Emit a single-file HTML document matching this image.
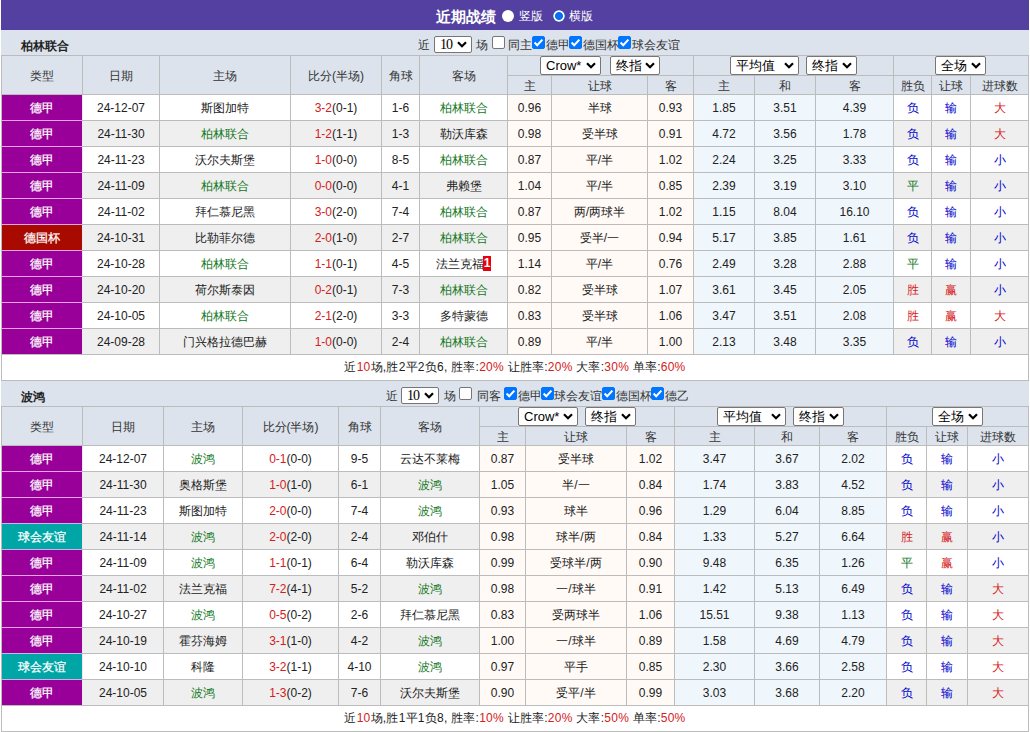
<!DOCTYPE html><html><head><meta charset="utf-8"><style>
html,body{margin:0;padding:0;background:#fff;width:1030px;height:732px;overflow:hidden}
body{font-family:"Liberation Sans",sans-serif;font-size:12px;color:#222;position:relative}
#w>div,#w>span{position:absolute;white-space:nowrap}
.ttl{color:#fff;font-weight:bold;font-size:15px}
.radio{width:12px;height:12px;border-radius:50%;background:#fff}
.radio.on{background:radial-gradient(circle,#0a6ff5 0,#0a6ff5 3.6px,#fff 4.4px,#fff 5.2px,#4f86e8 6px)}
.lb{height:25px;line-height:31px;color:#333}
.cb{width:11px;height:11px;border:1px solid #767676;border-radius:2px;background:#fff}
.cb.on{background:#0075ff;border-color:#0075ff}
.cb svg{position:absolute;left:-1px;top:-1px}
.s10{width:36px;height:15px;border:1px solid #767676;border-radius:2px;background:#fff;line-height:16px;font-size:14px;font-family:"Liberation Serif",serif;color:#000;text-indent:5px;letter-spacing:-1px}
.s10 .arr{top:4px}
.sel{height:17px;border:1px solid #767676;border-radius:2px;background:#fff;line-height:18px;font-size:13px;color:#000;text-indent:5px}
.arr{position:absolute;right:4px;top:5px;width:10px;height:7px;line-height:0}
.arr svg{display:block}
.rc{display:inline-block;margin-left:-1px;background:#e8000b;color:#fff;font-weight:bold;width:8px;height:15px;line-height:15px;text-align:center;vertical-align:1px;font-size:12px}
</style></head><body><div id="w"><div style="left:1px;top:0px;width:1028px;height:30px;background:#5340A0"></div>
<div class="ttl" style="left:436px;top:0;height:30px;line-height:33px">近期战绩</div>
<span class="radio" style="left:502px;top:10px"></span>
<div style="left:519px;top:0;line-height:33px;color:#fff">竖版</div>
<span class="radio on" style="left:553px;top:10px"></span>
<div style="left:569px;top:0;line-height:33px;color:#fff">横版</div>
<div style="left:1px;top:30px;width:1028px;height:25px;background:#DCE3ED"></div>
<div style="left:21px;top:30px;width:100px;height:25px;line-height:32px;font-weight:bold;color:#222;font-size:12px">柏林联合</div>
<div class="lb" style="left:418px;top:30px;">近</div><div class="s10" style="left:434px;top:36px">10<span class="arr"><svg width="10" height="7" viewBox="0 0 10 7"><path d="M1 1.2 L5 5.2 L9 1.2" stroke="#000" stroke-width="2.2" fill="none"/></svg></span></div><div class="lb" style="left:476px;top:30px;">场</div><div class="cb" style="left:492px;top:36px"></div><div class="lb" style="left:508px;top:30px;">同主</div><div class="cb on" style="left:532px;top:36px"><svg width="13" height="13" viewBox="0 0 13 13"><path d="M2.6 6.6 L5.2 9.2 L10.4 3.6" stroke="#fff" stroke-width="2.1" fill="none"/></svg></div><div class="lb" style="left:546px;top:30px;">德甲</div><div class="cb on" style="left:569px;top:36px"><svg width="13" height="13" viewBox="0 0 13 13"><path d="M2.6 6.6 L5.2 9.2 L10.4 3.6" stroke="#fff" stroke-width="2.1" fill="none"/></svg></div><div class="lb" style="left:583px;top:30px;">德国杯</div><div class="cb on" style="left:618px;top:36px"><svg width="13" height="13" viewBox="0 0 13 13"><path d="M2.6 6.6 L5.2 9.2 L10.4 3.6" stroke="#fff" stroke-width="2.1" fill="none"/></svg></div><div class="lb" style="left:632px;top:30px;">球会友谊</div>
<div style="left:1px;top:55px;width:1028px;height:39px;background:#DCE3ED"></div>
<div style="left:1px;top:94px;width:1028px;height:26px;background:#FFFFFF"></div>
<div style="left:507px;top:94px;width:186px;height:26px;background:#FFFAF6"></div>
<div style="left:693px;top:94px;width:200px;height:26px;background:#F0F7FC"></div>
<div style="left:1px;top:120px;width:1028px;height:26px;background:#EFEFEF"></div>
<div style="left:507px;top:120px;width:186px;height:26px;background:#FFFAF6"></div>
<div style="left:693px;top:120px;width:200px;height:26px;background:#F0F7FC"></div>
<div style="left:1px;top:146px;width:1028px;height:26px;background:#FFFFFF"></div>
<div style="left:507px;top:146px;width:186px;height:26px;background:#FFFAF6"></div>
<div style="left:693px;top:146px;width:200px;height:26px;background:#F0F7FC"></div>
<div style="left:1px;top:172px;width:1028px;height:26px;background:#EFEFEF"></div>
<div style="left:507px;top:172px;width:186px;height:26px;background:#FFFAF6"></div>
<div style="left:693px;top:172px;width:200px;height:26px;background:#F0F7FC"></div>
<div style="left:1px;top:198px;width:1028px;height:26px;background:#FFFFFF"></div>
<div style="left:507px;top:198px;width:186px;height:26px;background:#FFFAF6"></div>
<div style="left:693px;top:198px;width:200px;height:26px;background:#F0F7FC"></div>
<div style="left:1px;top:224px;width:1028px;height:26px;background:#EFEFEF"></div>
<div style="left:507px;top:224px;width:186px;height:26px;background:#FFFAF6"></div>
<div style="left:693px;top:224px;width:200px;height:26px;background:#F0F7FC"></div>
<div style="left:1px;top:250px;width:1028px;height:26px;background:#FFFFFF"></div>
<div style="left:507px;top:250px;width:186px;height:26px;background:#FFFAF6"></div>
<div style="left:693px;top:250px;width:200px;height:26px;background:#F0F7FC"></div>
<div style="left:1px;top:276px;width:1028px;height:26px;background:#EFEFEF"></div>
<div style="left:507px;top:276px;width:186px;height:26px;background:#FFFAF6"></div>
<div style="left:693px;top:276px;width:200px;height:26px;background:#F0F7FC"></div>
<div style="left:1px;top:302px;width:1028px;height:26px;background:#FFFFFF"></div>
<div style="left:507px;top:302px;width:186px;height:26px;background:#FFFAF6"></div>
<div style="left:693px;top:302px;width:200px;height:26px;background:#F0F7FC"></div>
<div style="left:1px;top:328px;width:1028px;height:26px;background:#EFEFEF"></div>
<div style="left:507px;top:328px;width:186px;height:26px;background:#FFFAF6"></div>
<div style="left:693px;top:328px;width:200px;height:26px;background:#F0F7FC"></div>
<div style="left:1px;top:354px;width:1028px;height:26px;background:#fff"></div>
<div style="left:1px;top:55px;width:1028px;height:1px;background:#BCBCBC"></div>
<div style="left:1px;top:94px;width:1028px;height:1px;background:#BCBCBC"></div>
<div style="left:1px;top:120px;width:1028px;height:1px;background:#BCBCBC"></div>
<div style="left:1px;top:146px;width:1028px;height:1px;background:#BCBCBC"></div>
<div style="left:1px;top:172px;width:1028px;height:1px;background:#BCBCBC"></div>
<div style="left:1px;top:198px;width:1028px;height:1px;background:#BCBCBC"></div>
<div style="left:1px;top:224px;width:1028px;height:1px;background:#BCBCBC"></div>
<div style="left:1px;top:250px;width:1028px;height:1px;background:#BCBCBC"></div>
<div style="left:1px;top:276px;width:1028px;height:1px;background:#BCBCBC"></div>
<div style="left:1px;top:302px;width:1028px;height:1px;background:#BCBCBC"></div>
<div style="left:1px;top:328px;width:1028px;height:1px;background:#BCBCBC"></div>
<div style="left:1px;top:354px;width:1028px;height:1px;background:#BCBCBC"></div>
<div style="left:1px;top:380px;width:1028px;height:1px;background:#BCBCBC"></div>
<div style="left:507px;top:75px;width:522px;height:1px;background:#BCBCBC"></div>
<div style="left:1px;top:55px;width:1px;height:326px;background:#BCBCBC"></div>
<div style="left:82px;top:55px;width:1px;height:300px;background:#BCBCBC"></div>
<div style="left:159px;top:55px;width:1px;height:300px;background:#BCBCBC"></div>
<div style="left:290px;top:55px;width:1px;height:300px;background:#BCBCBC"></div>
<div style="left:381px;top:55px;width:1px;height:300px;background:#BCBCBC"></div>
<div style="left:419px;top:55px;width:1px;height:300px;background:#BCBCBC"></div>
<div style="left:507px;top:55px;width:1px;height:300px;background:#BCBCBC"></div>
<div style="left:551px;top:75px;width:1px;height:280px;background:#BCBCBC"></div>
<div style="left:647px;top:75px;width:1px;height:280px;background:#BCBCBC"></div>
<div style="left:693px;top:55px;width:1px;height:300px;background:#BCBCBC"></div>
<div style="left:754px;top:75px;width:1px;height:280px;background:#BCBCBC"></div>
<div style="left:815px;top:75px;width:1px;height:280px;background:#BCBCBC"></div>
<div style="left:893px;top:55px;width:1px;height:300px;background:#BCBCBC"></div>
<div style="left:931px;top:75px;width:1px;height:280px;background:#BCBCBC"></div>
<div style="left:970px;top:75px;width:1px;height:280px;background:#BCBCBC"></div>
<div style="left:1028px;top:55px;width:1px;height:326px;background:#BCBCBC"></div>
<div style="left:2px;top:95px;width:80px;height:25px;background:#990099;color:#fff;line-height:27px;text-align:center;-webkit-text-stroke:0.25px #fff">德甲</div>
<div style="left:82px;top:95px;width:1px;height:25px;background:#F3E6F3"></div>
<div style="left:2px;top:121px;width:80px;height:25px;background:#990099;color:#fff;line-height:27px;text-align:center;-webkit-text-stroke:0.25px #fff">德甲</div>
<div style="left:82px;top:121px;width:1px;height:25px;background:#F3E6F3"></div>
<div style="left:2px;top:120px;width:80px;height:1px;background:#ECA4E6"></div>
<div style="left:2px;top:147px;width:80px;height:25px;background:#990099;color:#fff;line-height:27px;text-align:center;-webkit-text-stroke:0.25px #fff">德甲</div>
<div style="left:82px;top:147px;width:1px;height:25px;background:#F3E6F3"></div>
<div style="left:2px;top:146px;width:80px;height:1px;background:#ECA4E6"></div>
<div style="left:2px;top:173px;width:80px;height:25px;background:#990099;color:#fff;line-height:27px;text-align:center;-webkit-text-stroke:0.25px #fff">德甲</div>
<div style="left:82px;top:173px;width:1px;height:25px;background:#F3E6F3"></div>
<div style="left:2px;top:172px;width:80px;height:1px;background:#ECA4E6"></div>
<div style="left:2px;top:199px;width:80px;height:25px;background:#990099;color:#fff;line-height:27px;text-align:center;-webkit-text-stroke:0.25px #fff">德甲</div>
<div style="left:82px;top:199px;width:1px;height:25px;background:#F3E6F3"></div>
<div style="left:2px;top:198px;width:80px;height:1px;background:#ECA4E6"></div>
<div style="left:2px;top:225px;width:80px;height:25px;background:#A80A00;color:#fff;line-height:27px;text-align:center;-webkit-text-stroke:0.25px #fff">德国杯</div>
<div style="left:82px;top:225px;width:1px;height:25px;background:#F3E6F3"></div>
<div style="left:2px;top:224px;width:80px;height:1px;background:#ECA4E6"></div>
<div style="left:2px;top:251px;width:80px;height:25px;background:#990099;color:#fff;line-height:27px;text-align:center;-webkit-text-stroke:0.25px #fff">德甲</div>
<div style="left:82px;top:251px;width:1px;height:25px;background:#F3E6F3"></div>
<div style="left:2px;top:250px;width:80px;height:1px;background:#ECA4E6"></div>
<div style="left:2px;top:277px;width:80px;height:25px;background:#990099;color:#fff;line-height:27px;text-align:center;-webkit-text-stroke:0.25px #fff">德甲</div>
<div style="left:82px;top:277px;width:1px;height:25px;background:#F3E6F3"></div>
<div style="left:2px;top:276px;width:80px;height:1px;background:#ECA4E6"></div>
<div style="left:2px;top:303px;width:80px;height:25px;background:#990099;color:#fff;line-height:27px;text-align:center;-webkit-text-stroke:0.25px #fff">德甲</div>
<div style="left:82px;top:303px;width:1px;height:25px;background:#F3E6F3"></div>
<div style="left:2px;top:302px;width:80px;height:1px;background:#ECA4E6"></div>
<div style="left:2px;top:329px;width:80px;height:25px;background:#990099;color:#fff;line-height:27px;text-align:center;-webkit-text-stroke:0.25px #fff">德甲</div>
<div style="left:82px;top:329px;width:1px;height:25px;background:#F3E6F3"></div>
<div style="left:2px;top:328px;width:80px;height:1px;background:#ECA4E6"></div>
<div style="left:2px;top:56px;width:80px;height:38px;line-height:40px;text-align:center;color:#333">类型</div>
<div style="left:83px;top:56px;width:76px;height:38px;line-height:40px;text-align:center;color:#333">日期</div>
<div style="left:160px;top:56px;width:130px;height:38px;line-height:40px;text-align:center;color:#333">主场</div>
<div style="left:291px;top:56px;width:90px;height:38px;line-height:40px;text-align:center;color:#333">比分(半场)</div>
<div style="left:382px;top:56px;width:37px;height:38px;line-height:40px;text-align:center;color:#333">角球</div>
<div style="left:420px;top:56px;width:87px;height:38px;line-height:40px;text-align:center;color:#333">客场</div>
<div style="left:508px;top:76px;width:43px;height:18px;line-height:20px;text-align:center;color:#333">主</div>
<div style="left:552px;top:76px;width:95px;height:18px;line-height:20px;text-align:center;color:#333">让球</div>
<div style="left:648px;top:76px;width:45px;height:18px;line-height:20px;text-align:center;color:#333">客</div>
<div style="left:694px;top:76px;width:60px;height:18px;line-height:20px;text-align:center;color:#333">主</div>
<div style="left:755px;top:76px;width:60px;height:18px;line-height:20px;text-align:center;color:#333">和</div>
<div style="left:816px;top:76px;width:77px;height:18px;line-height:20px;text-align:center;color:#333">客</div>
<div style="left:894px;top:76px;width:37px;height:18px;line-height:20px;text-align:center;color:#333">胜负</div>
<div style="left:932px;top:76px;width:38px;height:18px;line-height:20px;text-align:center;color:#333">让球</div>
<div style="left:971px;top:76px;width:57px;height:18px;line-height:20px;text-align:center;color:#333">进球数</div>
<div class="sel" style="left:540px;top:56px;width:59px">Crow*<span class="arr"><svg width="10" height="7" viewBox="0 0 10 7"><path d="M1 1.2 L5 5.2 L9 1.2" stroke="#000" stroke-width="2.2" fill="none"/></svg></span></div><div class="sel" style="left:610px;top:56px;width:48px">终指<span class="arr"><svg width="10" height="7" viewBox="0 0 10 7"><path d="M1 1.2 L5 5.2 L9 1.2" stroke="#000" stroke-width="2.2" fill="none"/></svg></span></div><div class="sel" style="left:730px;top:56px;width:67px">平均值<span class="arr"><svg width="10" height="7" viewBox="0 0 10 7"><path d="M1 1.2 L5 5.2 L9 1.2" stroke="#000" stroke-width="2.2" fill="none"/></svg></span></div><div class="sel" style="left:806px;top:56px;width:49px">终指<span class="arr"><svg width="10" height="7" viewBox="0 0 10 7"><path d="M1 1.2 L5 5.2 L9 1.2" stroke="#000" stroke-width="2.2" fill="none"/></svg></span></div><div class="sel" style="left:935px;top:56px;width:49px">全场<span class="arr"><svg width="10" height="7" viewBox="0 0 10 7"><path d="M1 1.2 L5 5.2 L9 1.2" stroke="#000" stroke-width="2.2" fill="none"/></svg></span></div>
<div style="left:83px;top:95px;width:76px;height:25px;line-height:27px;text-align:center;">24-12-07</div>
<div style="left:160px;top:95px;width:130px;height:25px;line-height:27px;text-align:center;">斯图加特</div>
<div style="left:291px;top:95px;width:90px;height:25px;line-height:27px;text-align:center;"><span style="color:#D42020">3-2</span>(0-1)</div>
<div style="left:382px;top:95px;width:37px;height:25px;line-height:27px;text-align:center;">1-6</div>
<div style="left:420px;top:95px;width:87px;height:25px;line-height:27px;text-align:center;color:#117722">柏林联合</div>
<div style="left:508px;top:95px;width:43px;height:25px;line-height:27px;text-align:center;">0.96</div>
<div style="left:552px;top:95px;width:95px;height:25px;line-height:27px;text-align:center;">半球</div>
<div style="left:648px;top:95px;width:45px;height:25px;line-height:27px;text-align:center;">0.93</div>
<div style="left:694px;top:95px;width:60px;height:25px;line-height:27px;text-align:center;">1.85</div>
<div style="left:755px;top:95px;width:60px;height:25px;line-height:27px;text-align:center;">3.51</div>
<div style="left:816px;top:95px;width:77px;height:25px;line-height:27px;text-align:center;">4.39</div>
<div style="left:894px;top:95px;width:37px;height:25px;line-height:27px;text-align:center;color:#0000CC">负</div>
<div style="left:932px;top:95px;width:38px;height:25px;line-height:27px;text-align:center;color:#0000CC">输</div>
<div style="left:971px;top:95px;width:57px;height:25px;line-height:27px;text-align:center;color:#D42020">大</div>
<div style="left:83px;top:121px;width:76px;height:25px;line-height:27px;text-align:center;">24-11-30</div>
<div style="left:160px;top:121px;width:130px;height:25px;line-height:27px;text-align:center;color:#117722">柏林联合</div>
<div style="left:291px;top:121px;width:90px;height:25px;line-height:27px;text-align:center;"><span style="color:#D42020">1-2</span>(1-1)</div>
<div style="left:382px;top:121px;width:37px;height:25px;line-height:27px;text-align:center;">1-3</div>
<div style="left:420px;top:121px;width:87px;height:25px;line-height:27px;text-align:center;">勒沃库森</div>
<div style="left:508px;top:121px;width:43px;height:25px;line-height:27px;text-align:center;">0.98</div>
<div style="left:552px;top:121px;width:95px;height:25px;line-height:27px;text-align:center;">受半球</div>
<div style="left:648px;top:121px;width:45px;height:25px;line-height:27px;text-align:center;">0.91</div>
<div style="left:694px;top:121px;width:60px;height:25px;line-height:27px;text-align:center;">4.72</div>
<div style="left:755px;top:121px;width:60px;height:25px;line-height:27px;text-align:center;">3.56</div>
<div style="left:816px;top:121px;width:77px;height:25px;line-height:27px;text-align:center;">1.78</div>
<div style="left:894px;top:121px;width:37px;height:25px;line-height:27px;text-align:center;color:#0000CC">负</div>
<div style="left:932px;top:121px;width:38px;height:25px;line-height:27px;text-align:center;color:#0000CC">输</div>
<div style="left:971px;top:121px;width:57px;height:25px;line-height:27px;text-align:center;color:#D42020">大</div>
<div style="left:83px;top:147px;width:76px;height:25px;line-height:27px;text-align:center;">24-11-23</div>
<div style="left:160px;top:147px;width:130px;height:25px;line-height:27px;text-align:center;">沃尔夫斯堡</div>
<div style="left:291px;top:147px;width:90px;height:25px;line-height:27px;text-align:center;"><span style="color:#D42020">1-0</span>(0-0)</div>
<div style="left:382px;top:147px;width:37px;height:25px;line-height:27px;text-align:center;">8-5</div>
<div style="left:420px;top:147px;width:87px;height:25px;line-height:27px;text-align:center;color:#117722">柏林联合</div>
<div style="left:508px;top:147px;width:43px;height:25px;line-height:27px;text-align:center;">0.87</div>
<div style="left:552px;top:147px;width:95px;height:25px;line-height:27px;text-align:center;">平/半</div>
<div style="left:648px;top:147px;width:45px;height:25px;line-height:27px;text-align:center;">1.02</div>
<div style="left:694px;top:147px;width:60px;height:25px;line-height:27px;text-align:center;">2.24</div>
<div style="left:755px;top:147px;width:60px;height:25px;line-height:27px;text-align:center;">3.25</div>
<div style="left:816px;top:147px;width:77px;height:25px;line-height:27px;text-align:center;">3.33</div>
<div style="left:894px;top:147px;width:37px;height:25px;line-height:27px;text-align:center;color:#0000CC">负</div>
<div style="left:932px;top:147px;width:38px;height:25px;line-height:27px;text-align:center;color:#0000CC">输</div>
<div style="left:971px;top:147px;width:57px;height:25px;line-height:27px;text-align:center;color:#0000CC">小</div>
<div style="left:83px;top:173px;width:76px;height:25px;line-height:27px;text-align:center;">24-11-09</div>
<div style="left:160px;top:173px;width:130px;height:25px;line-height:27px;text-align:center;color:#117722">柏林联合</div>
<div style="left:291px;top:173px;width:90px;height:25px;line-height:27px;text-align:center;"><span style="color:#D42020">0-0</span>(0-0)</div>
<div style="left:382px;top:173px;width:37px;height:25px;line-height:27px;text-align:center;">4-1</div>
<div style="left:420px;top:173px;width:87px;height:25px;line-height:27px;text-align:center;">弗赖堡</div>
<div style="left:508px;top:173px;width:43px;height:25px;line-height:27px;text-align:center;">1.04</div>
<div style="left:552px;top:173px;width:95px;height:25px;line-height:27px;text-align:center;">平/半</div>
<div style="left:648px;top:173px;width:45px;height:25px;line-height:27px;text-align:center;">0.85</div>
<div style="left:694px;top:173px;width:60px;height:25px;line-height:27px;text-align:center;">2.39</div>
<div style="left:755px;top:173px;width:60px;height:25px;line-height:27px;text-align:center;">3.19</div>
<div style="left:816px;top:173px;width:77px;height:25px;line-height:27px;text-align:center;">3.10</div>
<div style="left:894px;top:173px;width:37px;height:25px;line-height:27px;text-align:center;color:#117722">平</div>
<div style="left:932px;top:173px;width:38px;height:25px;line-height:27px;text-align:center;color:#0000CC">输</div>
<div style="left:971px;top:173px;width:57px;height:25px;line-height:27px;text-align:center;color:#0000CC">小</div>
<div style="left:83px;top:199px;width:76px;height:25px;line-height:27px;text-align:center;">24-11-02</div>
<div style="left:160px;top:199px;width:130px;height:25px;line-height:27px;text-align:center;">拜仁慕尼黑</div>
<div style="left:291px;top:199px;width:90px;height:25px;line-height:27px;text-align:center;"><span style="color:#D42020">3-0</span>(2-0)</div>
<div style="left:382px;top:199px;width:37px;height:25px;line-height:27px;text-align:center;">7-4</div>
<div style="left:420px;top:199px;width:87px;height:25px;line-height:27px;text-align:center;color:#117722">柏林联合</div>
<div style="left:508px;top:199px;width:43px;height:25px;line-height:27px;text-align:center;">0.87</div>
<div style="left:552px;top:199px;width:95px;height:25px;line-height:27px;text-align:center;">两/两球半</div>
<div style="left:648px;top:199px;width:45px;height:25px;line-height:27px;text-align:center;">1.02</div>
<div style="left:694px;top:199px;width:60px;height:25px;line-height:27px;text-align:center;">1.15</div>
<div style="left:755px;top:199px;width:60px;height:25px;line-height:27px;text-align:center;">8.04</div>
<div style="left:816px;top:199px;width:77px;height:25px;line-height:27px;text-align:center;">16.10</div>
<div style="left:894px;top:199px;width:37px;height:25px;line-height:27px;text-align:center;color:#0000CC">负</div>
<div style="left:932px;top:199px;width:38px;height:25px;line-height:27px;text-align:center;color:#0000CC">输</div>
<div style="left:971px;top:199px;width:57px;height:25px;line-height:27px;text-align:center;color:#0000CC">小</div>
<div style="left:83px;top:225px;width:76px;height:25px;line-height:27px;text-align:center;">24-10-31</div>
<div style="left:160px;top:225px;width:130px;height:25px;line-height:27px;text-align:center;">比勒菲尔德</div>
<div style="left:291px;top:225px;width:90px;height:25px;line-height:27px;text-align:center;"><span style="color:#D42020">2-0</span>(1-0)</div>
<div style="left:382px;top:225px;width:37px;height:25px;line-height:27px;text-align:center;">2-7</div>
<div style="left:420px;top:225px;width:87px;height:25px;line-height:27px;text-align:center;color:#117722">柏林联合</div>
<div style="left:508px;top:225px;width:43px;height:25px;line-height:27px;text-align:center;">0.95</div>
<div style="left:552px;top:225px;width:95px;height:25px;line-height:27px;text-align:center;">受半/一</div>
<div style="left:648px;top:225px;width:45px;height:25px;line-height:27px;text-align:center;">0.94</div>
<div style="left:694px;top:225px;width:60px;height:25px;line-height:27px;text-align:center;">5.17</div>
<div style="left:755px;top:225px;width:60px;height:25px;line-height:27px;text-align:center;">3.85</div>
<div style="left:816px;top:225px;width:77px;height:25px;line-height:27px;text-align:center;">1.61</div>
<div style="left:894px;top:225px;width:37px;height:25px;line-height:27px;text-align:center;color:#0000CC">负</div>
<div style="left:932px;top:225px;width:38px;height:25px;line-height:27px;text-align:center;color:#0000CC">输</div>
<div style="left:971px;top:225px;width:57px;height:25px;line-height:27px;text-align:center;color:#0000CC">小</div>
<div style="left:83px;top:251px;width:76px;height:25px;line-height:27px;text-align:center;">24-10-28</div>
<div style="left:160px;top:251px;width:130px;height:25px;line-height:27px;text-align:center;color:#117722">柏林联合</div>
<div style="left:291px;top:251px;width:90px;height:25px;line-height:27px;text-align:center;"><span style="color:#D42020">1-1</span>(0-1)</div>
<div style="left:382px;top:251px;width:37px;height:25px;line-height:27px;text-align:center;">4-5</div>
<div style="left:420px;top:251px;width:87px;height:25px;line-height:27px;text-align:center;">法兰克福<span class="rc">1</span></div>
<div style="left:508px;top:251px;width:43px;height:25px;line-height:27px;text-align:center;">1.14</div>
<div style="left:552px;top:251px;width:95px;height:25px;line-height:27px;text-align:center;">平/半</div>
<div style="left:648px;top:251px;width:45px;height:25px;line-height:27px;text-align:center;">0.76</div>
<div style="left:694px;top:251px;width:60px;height:25px;line-height:27px;text-align:center;">2.49</div>
<div style="left:755px;top:251px;width:60px;height:25px;line-height:27px;text-align:center;">3.28</div>
<div style="left:816px;top:251px;width:77px;height:25px;line-height:27px;text-align:center;">2.88</div>
<div style="left:894px;top:251px;width:37px;height:25px;line-height:27px;text-align:center;color:#117722">平</div>
<div style="left:932px;top:251px;width:38px;height:25px;line-height:27px;text-align:center;color:#0000CC">输</div>
<div style="left:971px;top:251px;width:57px;height:25px;line-height:27px;text-align:center;color:#0000CC">小</div>
<div style="left:83px;top:277px;width:76px;height:25px;line-height:27px;text-align:center;">24-10-20</div>
<div style="left:160px;top:277px;width:130px;height:25px;line-height:27px;text-align:center;">荷尔斯泰因</div>
<div style="left:291px;top:277px;width:90px;height:25px;line-height:27px;text-align:center;"><span style="color:#D42020">0-2</span>(0-1)</div>
<div style="left:382px;top:277px;width:37px;height:25px;line-height:27px;text-align:center;">7-3</div>
<div style="left:420px;top:277px;width:87px;height:25px;line-height:27px;text-align:center;color:#117722">柏林联合</div>
<div style="left:508px;top:277px;width:43px;height:25px;line-height:27px;text-align:center;">0.82</div>
<div style="left:552px;top:277px;width:95px;height:25px;line-height:27px;text-align:center;">受半球</div>
<div style="left:648px;top:277px;width:45px;height:25px;line-height:27px;text-align:center;">1.07</div>
<div style="left:694px;top:277px;width:60px;height:25px;line-height:27px;text-align:center;">3.61</div>
<div style="left:755px;top:277px;width:60px;height:25px;line-height:27px;text-align:center;">3.45</div>
<div style="left:816px;top:277px;width:77px;height:25px;line-height:27px;text-align:center;">2.05</div>
<div style="left:894px;top:277px;width:37px;height:25px;line-height:27px;text-align:center;color:#D42020">胜</div>
<div style="left:932px;top:277px;width:38px;height:25px;line-height:27px;text-align:center;color:#D42020">赢</div>
<div style="left:971px;top:277px;width:57px;height:25px;line-height:27px;text-align:center;color:#0000CC">小</div>
<div style="left:83px;top:303px;width:76px;height:25px;line-height:27px;text-align:center;">24-10-05</div>
<div style="left:160px;top:303px;width:130px;height:25px;line-height:27px;text-align:center;color:#117722">柏林联合</div>
<div style="left:291px;top:303px;width:90px;height:25px;line-height:27px;text-align:center;"><span style="color:#D42020">2-1</span>(2-0)</div>
<div style="left:382px;top:303px;width:37px;height:25px;line-height:27px;text-align:center;">3-3</div>
<div style="left:420px;top:303px;width:87px;height:25px;line-height:27px;text-align:center;">多特蒙德</div>
<div style="left:508px;top:303px;width:43px;height:25px;line-height:27px;text-align:center;">0.83</div>
<div style="left:552px;top:303px;width:95px;height:25px;line-height:27px;text-align:center;">受半球</div>
<div style="left:648px;top:303px;width:45px;height:25px;line-height:27px;text-align:center;">1.06</div>
<div style="left:694px;top:303px;width:60px;height:25px;line-height:27px;text-align:center;">3.47</div>
<div style="left:755px;top:303px;width:60px;height:25px;line-height:27px;text-align:center;">3.51</div>
<div style="left:816px;top:303px;width:77px;height:25px;line-height:27px;text-align:center;">2.08</div>
<div style="left:894px;top:303px;width:37px;height:25px;line-height:27px;text-align:center;color:#D42020">胜</div>
<div style="left:932px;top:303px;width:38px;height:25px;line-height:27px;text-align:center;color:#D42020">赢</div>
<div style="left:971px;top:303px;width:57px;height:25px;line-height:27px;text-align:center;color:#D42020">大</div>
<div style="left:83px;top:329px;width:76px;height:25px;line-height:27px;text-align:center;">24-09-28</div>
<div style="left:160px;top:329px;width:130px;height:25px;line-height:27px;text-align:center;">门兴格拉德巴赫</div>
<div style="left:291px;top:329px;width:90px;height:25px;line-height:27px;text-align:center;"><span style="color:#D42020">1-0</span>(0-0)</div>
<div style="left:382px;top:329px;width:37px;height:25px;line-height:27px;text-align:center;">2-4</div>
<div style="left:420px;top:329px;width:87px;height:25px;line-height:27px;text-align:center;color:#117722">柏林联合</div>
<div style="left:508px;top:329px;width:43px;height:25px;line-height:27px;text-align:center;">0.89</div>
<div style="left:552px;top:329px;width:95px;height:25px;line-height:27px;text-align:center;">平/半</div>
<div style="left:648px;top:329px;width:45px;height:25px;line-height:27px;text-align:center;">1.00</div>
<div style="left:694px;top:329px;width:60px;height:25px;line-height:27px;text-align:center;">2.13</div>
<div style="left:755px;top:329px;width:60px;height:25px;line-height:27px;text-align:center;">3.48</div>
<div style="left:816px;top:329px;width:77px;height:25px;line-height:27px;text-align:center;">3.35</div>
<div style="left:894px;top:329px;width:37px;height:25px;line-height:27px;text-align:center;color:#0000CC">负</div>
<div style="left:932px;top:329px;width:38px;height:25px;line-height:27px;text-align:center;color:#0000CC">输</div>
<div style="left:971px;top:329px;width:57px;height:25px;line-height:27px;text-align:center;color:#0000CC">小</div>
<div style="left:1px;top:355px;width:1028px;height:25px;line-height:25px;text-align:center;letter-spacing:0.25px">近<span style="color:#D42020">10</span>场,胜2平2负6, 胜率:<span style="color:#D42020">20%</span> 让胜率:<span style="color:#D42020">20%</span> 大率:<span style="color:#D42020">30%</span> 单率:<span style="color:#D42020">60%</span></div>
<div style="left:1px;top:381px;width:1028px;height:25px;background:#DCE3ED"></div>
<div style="left:21px;top:381px;width:100px;height:25px;line-height:32px;font-weight:bold;color:#222;font-size:12px">波鸿</div>
<div class="lb" style="left:386px;top:381px;">近</div><div class="s10" style="left:401px;top:387px">10<span class="arr"><svg width="10" height="7" viewBox="0 0 10 7"><path d="M1 1.2 L5 5.2 L9 1.2" stroke="#000" stroke-width="2.2" fill="none"/></svg></span></div><div class="lb" style="left:444px;top:381px;">场</div><div class="cb" style="left:459px;top:387px"></div><div class="lb" style="left:477px;top:381px;">同客</div><div class="cb on" style="left:504px;top:387px"><svg width="13" height="13" viewBox="0 0 13 13"><path d="M2.6 6.6 L5.2 9.2 L10.4 3.6" stroke="#fff" stroke-width="2.1" fill="none"/></svg></div><div class="lb" style="left:518px;top:381px;">德甲</div><div class="cb on" style="left:541px;top:387px"><svg width="13" height="13" viewBox="0 0 13 13"><path d="M2.6 6.6 L5.2 9.2 L10.4 3.6" stroke="#fff" stroke-width="2.1" fill="none"/></svg></div><div class="lb" style="left:554px;top:381px;">球会友谊</div><div class="cb on" style="left:602px;top:387px"><svg width="13" height="13" viewBox="0 0 13 13"><path d="M2.6 6.6 L5.2 9.2 L10.4 3.6" stroke="#fff" stroke-width="2.1" fill="none"/></svg></div><div class="lb" style="left:616px;top:381px;">德国杯</div><div class="cb on" style="left:651px;top:387px"><svg width="13" height="13" viewBox="0 0 13 13"><path d="M2.6 6.6 L5.2 9.2 L10.4 3.6" stroke="#fff" stroke-width="2.1" fill="none"/></svg></div><div class="lb" style="left:665px;top:381px;">德乙</div>
<div style="left:1px;top:406px;width:1028px;height:39px;background:#DCE3ED"></div>
<div style="left:1px;top:445px;width:1028px;height:26px;background:#FFFFFF"></div>
<div style="left:479px;top:445px;width:195px;height:26px;background:#FFFAF6"></div>
<div style="left:674px;top:445px;width:212px;height:26px;background:#F0F7FC"></div>
<div style="left:1px;top:471px;width:1028px;height:26px;background:#EFEFEF"></div>
<div style="left:479px;top:471px;width:195px;height:26px;background:#FFFAF6"></div>
<div style="left:674px;top:471px;width:212px;height:26px;background:#F0F7FC"></div>
<div style="left:1px;top:497px;width:1028px;height:26px;background:#FFFFFF"></div>
<div style="left:479px;top:497px;width:195px;height:26px;background:#FFFAF6"></div>
<div style="left:674px;top:497px;width:212px;height:26px;background:#F0F7FC"></div>
<div style="left:1px;top:523px;width:1028px;height:26px;background:#EFEFEF"></div>
<div style="left:479px;top:523px;width:195px;height:26px;background:#FFFAF6"></div>
<div style="left:674px;top:523px;width:212px;height:26px;background:#F0F7FC"></div>
<div style="left:1px;top:549px;width:1028px;height:26px;background:#FFFFFF"></div>
<div style="left:479px;top:549px;width:195px;height:26px;background:#FFFAF6"></div>
<div style="left:674px;top:549px;width:212px;height:26px;background:#F0F7FC"></div>
<div style="left:1px;top:575px;width:1028px;height:26px;background:#EFEFEF"></div>
<div style="left:479px;top:575px;width:195px;height:26px;background:#FFFAF6"></div>
<div style="left:674px;top:575px;width:212px;height:26px;background:#F0F7FC"></div>
<div style="left:1px;top:601px;width:1028px;height:26px;background:#FFFFFF"></div>
<div style="left:479px;top:601px;width:195px;height:26px;background:#FFFAF6"></div>
<div style="left:674px;top:601px;width:212px;height:26px;background:#F0F7FC"></div>
<div style="left:1px;top:627px;width:1028px;height:26px;background:#EFEFEF"></div>
<div style="left:479px;top:627px;width:195px;height:26px;background:#FFFAF6"></div>
<div style="left:674px;top:627px;width:212px;height:26px;background:#F0F7FC"></div>
<div style="left:1px;top:653px;width:1028px;height:26px;background:#FFFFFF"></div>
<div style="left:479px;top:653px;width:195px;height:26px;background:#FFFAF6"></div>
<div style="left:674px;top:653px;width:212px;height:26px;background:#F0F7FC"></div>
<div style="left:1px;top:679px;width:1028px;height:26px;background:#EFEFEF"></div>
<div style="left:479px;top:679px;width:195px;height:26px;background:#FFFAF6"></div>
<div style="left:674px;top:679px;width:212px;height:26px;background:#F0F7FC"></div>
<div style="left:1px;top:705px;width:1028px;height:26px;background:#fff"></div>
<div style="left:1px;top:406px;width:1028px;height:1px;background:#BCBCBC"></div>
<div style="left:1px;top:445px;width:1028px;height:1px;background:#BCBCBC"></div>
<div style="left:1px;top:471px;width:1028px;height:1px;background:#BCBCBC"></div>
<div style="left:1px;top:497px;width:1028px;height:1px;background:#BCBCBC"></div>
<div style="left:1px;top:523px;width:1028px;height:1px;background:#BCBCBC"></div>
<div style="left:1px;top:549px;width:1028px;height:1px;background:#BCBCBC"></div>
<div style="left:1px;top:575px;width:1028px;height:1px;background:#BCBCBC"></div>
<div style="left:1px;top:601px;width:1028px;height:1px;background:#BCBCBC"></div>
<div style="left:1px;top:627px;width:1028px;height:1px;background:#BCBCBC"></div>
<div style="left:1px;top:653px;width:1028px;height:1px;background:#BCBCBC"></div>
<div style="left:1px;top:679px;width:1028px;height:1px;background:#BCBCBC"></div>
<div style="left:1px;top:705px;width:1028px;height:1px;background:#BCBCBC"></div>
<div style="left:1px;top:731px;width:1028px;height:1px;background:#BCBCBC"></div>
<div style="left:479px;top:426px;width:550px;height:1px;background:#BCBCBC"></div>
<div style="left:1px;top:406px;width:1px;height:326px;background:#BCBCBC"></div>
<div style="left:82px;top:406px;width:1px;height:300px;background:#BCBCBC"></div>
<div style="left:163px;top:406px;width:1px;height:300px;background:#BCBCBC"></div>
<div style="left:242px;top:406px;width:1px;height:300px;background:#BCBCBC"></div>
<div style="left:338px;top:406px;width:1px;height:300px;background:#BCBCBC"></div>
<div style="left:380px;top:406px;width:1px;height:300px;background:#BCBCBC"></div>
<div style="left:479px;top:406px;width:1px;height:300px;background:#BCBCBC"></div>
<div style="left:525px;top:426px;width:1px;height:280px;background:#BCBCBC"></div>
<div style="left:626px;top:426px;width:1px;height:280px;background:#BCBCBC"></div>
<div style="left:674px;top:406px;width:1px;height:300px;background:#BCBCBC"></div>
<div style="left:754px;top:426px;width:1px;height:280px;background:#BCBCBC"></div>
<div style="left:819px;top:426px;width:1px;height:280px;background:#BCBCBC"></div>
<div style="left:886px;top:406px;width:1px;height:300px;background:#BCBCBC"></div>
<div style="left:926px;top:426px;width:1px;height:280px;background:#BCBCBC"></div>
<div style="left:967px;top:426px;width:1px;height:280px;background:#BCBCBC"></div>
<div style="left:1028px;top:406px;width:1px;height:326px;background:#BCBCBC"></div>
<div style="left:2px;top:446px;width:80px;height:25px;background:#990099;color:#fff;line-height:27px;text-align:center;-webkit-text-stroke:0.25px #fff">德甲</div>
<div style="left:82px;top:446px;width:1px;height:25px;background:#F3E6F3"></div>
<div style="left:2px;top:472px;width:80px;height:25px;background:#990099;color:#fff;line-height:27px;text-align:center;-webkit-text-stroke:0.25px #fff">德甲</div>
<div style="left:82px;top:472px;width:1px;height:25px;background:#F3E6F3"></div>
<div style="left:2px;top:471px;width:80px;height:1px;background:#ECA4E6"></div>
<div style="left:2px;top:498px;width:80px;height:25px;background:#990099;color:#fff;line-height:27px;text-align:center;-webkit-text-stroke:0.25px #fff">德甲</div>
<div style="left:82px;top:498px;width:1px;height:25px;background:#F3E6F3"></div>
<div style="left:2px;top:497px;width:80px;height:1px;background:#ECA4E6"></div>
<div style="left:2px;top:524px;width:80px;height:25px;background:#00A6A6;color:#fff;line-height:27px;text-align:center;-webkit-text-stroke:0.25px #fff">球会友谊</div>
<div style="left:82px;top:524px;width:1px;height:25px;background:#F3E6F3"></div>
<div style="left:2px;top:523px;width:80px;height:1px;background:#C9B8E6"></div>
<div style="left:2px;top:550px;width:80px;height:25px;background:#990099;color:#fff;line-height:27px;text-align:center;-webkit-text-stroke:0.25px #fff">德甲</div>
<div style="left:82px;top:550px;width:1px;height:25px;background:#F3E6F3"></div>
<div style="left:2px;top:549px;width:80px;height:1px;background:#C9B8E6"></div>
<div style="left:2px;top:576px;width:80px;height:25px;background:#990099;color:#fff;line-height:27px;text-align:center;-webkit-text-stroke:0.25px #fff">德甲</div>
<div style="left:82px;top:576px;width:1px;height:25px;background:#F3E6F3"></div>
<div style="left:2px;top:575px;width:80px;height:1px;background:#ECA4E6"></div>
<div style="left:2px;top:602px;width:80px;height:25px;background:#990099;color:#fff;line-height:27px;text-align:center;-webkit-text-stroke:0.25px #fff">德甲</div>
<div style="left:82px;top:602px;width:1px;height:25px;background:#F3E6F3"></div>
<div style="left:2px;top:601px;width:80px;height:1px;background:#ECA4E6"></div>
<div style="left:2px;top:628px;width:80px;height:25px;background:#990099;color:#fff;line-height:27px;text-align:center;-webkit-text-stroke:0.25px #fff">德甲</div>
<div style="left:82px;top:628px;width:1px;height:25px;background:#F3E6F3"></div>
<div style="left:2px;top:627px;width:80px;height:1px;background:#ECA4E6"></div>
<div style="left:2px;top:654px;width:80px;height:25px;background:#00A6A6;color:#fff;line-height:27px;text-align:center;-webkit-text-stroke:0.25px #fff">球会友谊</div>
<div style="left:82px;top:654px;width:1px;height:25px;background:#F3E6F3"></div>
<div style="left:2px;top:653px;width:80px;height:1px;background:#C9B8E6"></div>
<div style="left:2px;top:680px;width:80px;height:25px;background:#990099;color:#fff;line-height:27px;text-align:center;-webkit-text-stroke:0.25px #fff">德甲</div>
<div style="left:82px;top:680px;width:1px;height:25px;background:#F3E6F3"></div>
<div style="left:2px;top:679px;width:80px;height:1px;background:#C9B8E6"></div>
<div style="left:2px;top:407px;width:80px;height:38px;line-height:40px;text-align:center;color:#333">类型</div>
<div style="left:83px;top:407px;width:80px;height:38px;line-height:40px;text-align:center;color:#333">日期</div>
<div style="left:164px;top:407px;width:78px;height:38px;line-height:40px;text-align:center;color:#333">主场</div>
<div style="left:243px;top:407px;width:95px;height:38px;line-height:40px;text-align:center;color:#333">比分(半场)</div>
<div style="left:339px;top:407px;width:41px;height:38px;line-height:40px;text-align:center;color:#333">角球</div>
<div style="left:381px;top:407px;width:98px;height:38px;line-height:40px;text-align:center;color:#333">客场</div>
<div style="left:480px;top:427px;width:45px;height:18px;line-height:20px;text-align:center;color:#333">主</div>
<div style="left:526px;top:427px;width:100px;height:18px;line-height:20px;text-align:center;color:#333">让球</div>
<div style="left:627px;top:427px;width:47px;height:18px;line-height:20px;text-align:center;color:#333">客</div>
<div style="left:675px;top:427px;width:79px;height:18px;line-height:20px;text-align:center;color:#333">主</div>
<div style="left:755px;top:427px;width:64px;height:18px;line-height:20px;text-align:center;color:#333">和</div>
<div style="left:820px;top:427px;width:66px;height:18px;line-height:20px;text-align:center;color:#333">客</div>
<div style="left:887px;top:427px;width:39px;height:18px;line-height:20px;text-align:center;color:#333">胜负</div>
<div style="left:927px;top:427px;width:40px;height:18px;line-height:20px;text-align:center;color:#333">让球</div>
<div style="left:968px;top:427px;width:60px;height:18px;line-height:20px;text-align:center;color:#333">进球数</div>
<div class="sel" style="left:518px;top:407px;width:58px">Crow*<span class="arr"><svg width="10" height="7" viewBox="0 0 10 7"><path d="M1 1.2 L5 5.2 L9 1.2" stroke="#000" stroke-width="2.2" fill="none"/></svg></span></div><div class="sel" style="left:585px;top:407px;width:49px">终指<span class="arr"><svg width="10" height="7" viewBox="0 0 10 7"><path d="M1 1.2 L5 5.2 L9 1.2" stroke="#000" stroke-width="2.2" fill="none"/></svg></span></div><div class="sel" style="left:717px;top:407px;width:67px">平均值<span class="arr"><svg width="10" height="7" viewBox="0 0 10 7"><path d="M1 1.2 L5 5.2 L9 1.2" stroke="#000" stroke-width="2.2" fill="none"/></svg></span></div><div class="sel" style="left:793px;top:407px;width:49px">终指<span class="arr"><svg width="10" height="7" viewBox="0 0 10 7"><path d="M1 1.2 L5 5.2 L9 1.2" stroke="#000" stroke-width="2.2" fill="none"/></svg></span></div><div class="sel" style="left:932px;top:407px;width:49px">全场<span class="arr"><svg width="10" height="7" viewBox="0 0 10 7"><path d="M1 1.2 L5 5.2 L9 1.2" stroke="#000" stroke-width="2.2" fill="none"/></svg></span></div>
<div style="left:83px;top:446px;width:80px;height:25px;line-height:27px;text-align:center;">24-12-07</div>
<div style="left:164px;top:446px;width:78px;height:25px;line-height:27px;text-align:center;color:#117722">波鸿</div>
<div style="left:243px;top:446px;width:95px;height:25px;line-height:27px;text-align:center;"><span style="color:#D42020">0-1</span>(0-0)</div>
<div style="left:339px;top:446px;width:41px;height:25px;line-height:27px;text-align:center;">9-5</div>
<div style="left:381px;top:446px;width:98px;height:25px;line-height:27px;text-align:center;">云达不莱梅</div>
<div style="left:480px;top:446px;width:45px;height:25px;line-height:27px;text-align:center;">0.87</div>
<div style="left:526px;top:446px;width:100px;height:25px;line-height:27px;text-align:center;">受半球</div>
<div style="left:627px;top:446px;width:47px;height:25px;line-height:27px;text-align:center;">1.02</div>
<div style="left:675px;top:446px;width:79px;height:25px;line-height:27px;text-align:center;">3.47</div>
<div style="left:755px;top:446px;width:64px;height:25px;line-height:27px;text-align:center;">3.67</div>
<div style="left:820px;top:446px;width:66px;height:25px;line-height:27px;text-align:center;">2.02</div>
<div style="left:887px;top:446px;width:39px;height:25px;line-height:27px;text-align:center;color:#0000CC">负</div>
<div style="left:927px;top:446px;width:40px;height:25px;line-height:27px;text-align:center;color:#0000CC">输</div>
<div style="left:968px;top:446px;width:60px;height:25px;line-height:27px;text-align:center;color:#0000CC">小</div>
<div style="left:83px;top:472px;width:80px;height:25px;line-height:27px;text-align:center;">24-11-30</div>
<div style="left:164px;top:472px;width:78px;height:25px;line-height:27px;text-align:center;">奥格斯堡</div>
<div style="left:243px;top:472px;width:95px;height:25px;line-height:27px;text-align:center;"><span style="color:#D42020">1-0</span>(1-0)</div>
<div style="left:339px;top:472px;width:41px;height:25px;line-height:27px;text-align:center;">6-1</div>
<div style="left:381px;top:472px;width:98px;height:25px;line-height:27px;text-align:center;color:#117722">波鸿</div>
<div style="left:480px;top:472px;width:45px;height:25px;line-height:27px;text-align:center;">1.05</div>
<div style="left:526px;top:472px;width:100px;height:25px;line-height:27px;text-align:center;">半/一</div>
<div style="left:627px;top:472px;width:47px;height:25px;line-height:27px;text-align:center;">0.84</div>
<div style="left:675px;top:472px;width:79px;height:25px;line-height:27px;text-align:center;">1.74</div>
<div style="left:755px;top:472px;width:64px;height:25px;line-height:27px;text-align:center;">3.83</div>
<div style="left:820px;top:472px;width:66px;height:25px;line-height:27px;text-align:center;">4.52</div>
<div style="left:887px;top:472px;width:39px;height:25px;line-height:27px;text-align:center;color:#0000CC">负</div>
<div style="left:927px;top:472px;width:40px;height:25px;line-height:27px;text-align:center;color:#0000CC">输</div>
<div style="left:968px;top:472px;width:60px;height:25px;line-height:27px;text-align:center;color:#0000CC">小</div>
<div style="left:83px;top:498px;width:80px;height:25px;line-height:27px;text-align:center;">24-11-23</div>
<div style="left:164px;top:498px;width:78px;height:25px;line-height:27px;text-align:center;">斯图加特</div>
<div style="left:243px;top:498px;width:95px;height:25px;line-height:27px;text-align:center;"><span style="color:#D42020">2-0</span>(0-0)</div>
<div style="left:339px;top:498px;width:41px;height:25px;line-height:27px;text-align:center;">7-4</div>
<div style="left:381px;top:498px;width:98px;height:25px;line-height:27px;text-align:center;color:#117722">波鸿</div>
<div style="left:480px;top:498px;width:45px;height:25px;line-height:27px;text-align:center;">0.93</div>
<div style="left:526px;top:498px;width:100px;height:25px;line-height:27px;text-align:center;">球半</div>
<div style="left:627px;top:498px;width:47px;height:25px;line-height:27px;text-align:center;">0.96</div>
<div style="left:675px;top:498px;width:79px;height:25px;line-height:27px;text-align:center;">1.29</div>
<div style="left:755px;top:498px;width:64px;height:25px;line-height:27px;text-align:center;">6.04</div>
<div style="left:820px;top:498px;width:66px;height:25px;line-height:27px;text-align:center;">8.85</div>
<div style="left:887px;top:498px;width:39px;height:25px;line-height:27px;text-align:center;color:#0000CC">负</div>
<div style="left:927px;top:498px;width:40px;height:25px;line-height:27px;text-align:center;color:#0000CC">输</div>
<div style="left:968px;top:498px;width:60px;height:25px;line-height:27px;text-align:center;color:#0000CC">小</div>
<div style="left:83px;top:524px;width:80px;height:25px;line-height:27px;text-align:center;">24-11-14</div>
<div style="left:164px;top:524px;width:78px;height:25px;line-height:27px;text-align:center;color:#117722">波鸿</div>
<div style="left:243px;top:524px;width:95px;height:25px;line-height:27px;text-align:center;"><span style="color:#D42020">2-0</span>(2-0)</div>
<div style="left:339px;top:524px;width:41px;height:25px;line-height:27px;text-align:center;">2-4</div>
<div style="left:381px;top:524px;width:98px;height:25px;line-height:27px;text-align:center;">邓伯什</div>
<div style="left:480px;top:524px;width:45px;height:25px;line-height:27px;text-align:center;">0.98</div>
<div style="left:526px;top:524px;width:100px;height:25px;line-height:27px;text-align:center;">球半/两</div>
<div style="left:627px;top:524px;width:47px;height:25px;line-height:27px;text-align:center;">0.84</div>
<div style="left:675px;top:524px;width:79px;height:25px;line-height:27px;text-align:center;">1.33</div>
<div style="left:755px;top:524px;width:64px;height:25px;line-height:27px;text-align:center;">5.27</div>
<div style="left:820px;top:524px;width:66px;height:25px;line-height:27px;text-align:center;">6.64</div>
<div style="left:887px;top:524px;width:39px;height:25px;line-height:27px;text-align:center;color:#D42020">胜</div>
<div style="left:927px;top:524px;width:40px;height:25px;line-height:27px;text-align:center;color:#D42020">赢</div>
<div style="left:968px;top:524px;width:60px;height:25px;line-height:27px;text-align:center;color:#0000CC">小</div>
<div style="left:83px;top:550px;width:80px;height:25px;line-height:27px;text-align:center;">24-11-09</div>
<div style="left:164px;top:550px;width:78px;height:25px;line-height:27px;text-align:center;color:#117722">波鸿</div>
<div style="left:243px;top:550px;width:95px;height:25px;line-height:27px;text-align:center;"><span style="color:#D42020">1-1</span>(0-1)</div>
<div style="left:339px;top:550px;width:41px;height:25px;line-height:27px;text-align:center;">6-4</div>
<div style="left:381px;top:550px;width:98px;height:25px;line-height:27px;text-align:center;">勒沃库森</div>
<div style="left:480px;top:550px;width:45px;height:25px;line-height:27px;text-align:center;">0.99</div>
<div style="left:526px;top:550px;width:100px;height:25px;line-height:27px;text-align:center;">受球半/两</div>
<div style="left:627px;top:550px;width:47px;height:25px;line-height:27px;text-align:center;">0.90</div>
<div style="left:675px;top:550px;width:79px;height:25px;line-height:27px;text-align:center;">9.48</div>
<div style="left:755px;top:550px;width:64px;height:25px;line-height:27px;text-align:center;">6.35</div>
<div style="left:820px;top:550px;width:66px;height:25px;line-height:27px;text-align:center;">1.26</div>
<div style="left:887px;top:550px;width:39px;height:25px;line-height:27px;text-align:center;color:#117722">平</div>
<div style="left:927px;top:550px;width:40px;height:25px;line-height:27px;text-align:center;color:#D42020">赢</div>
<div style="left:968px;top:550px;width:60px;height:25px;line-height:27px;text-align:center;color:#0000CC">小</div>
<div style="left:83px;top:576px;width:80px;height:25px;line-height:27px;text-align:center;">24-11-02</div>
<div style="left:164px;top:576px;width:78px;height:25px;line-height:27px;text-align:center;">法兰克福</div>
<div style="left:243px;top:576px;width:95px;height:25px;line-height:27px;text-align:center;"><span style="color:#D42020">7-2</span>(4-1)</div>
<div style="left:339px;top:576px;width:41px;height:25px;line-height:27px;text-align:center;">5-2</div>
<div style="left:381px;top:576px;width:98px;height:25px;line-height:27px;text-align:center;color:#117722">波鸿</div>
<div style="left:480px;top:576px;width:45px;height:25px;line-height:27px;text-align:center;">0.98</div>
<div style="left:526px;top:576px;width:100px;height:25px;line-height:27px;text-align:center;">一/球半</div>
<div style="left:627px;top:576px;width:47px;height:25px;line-height:27px;text-align:center;">0.91</div>
<div style="left:675px;top:576px;width:79px;height:25px;line-height:27px;text-align:center;">1.42</div>
<div style="left:755px;top:576px;width:64px;height:25px;line-height:27px;text-align:center;">5.13</div>
<div style="left:820px;top:576px;width:66px;height:25px;line-height:27px;text-align:center;">6.49</div>
<div style="left:887px;top:576px;width:39px;height:25px;line-height:27px;text-align:center;color:#0000CC">负</div>
<div style="left:927px;top:576px;width:40px;height:25px;line-height:27px;text-align:center;color:#0000CC">输</div>
<div style="left:968px;top:576px;width:60px;height:25px;line-height:27px;text-align:center;color:#D42020">大</div>
<div style="left:83px;top:602px;width:80px;height:25px;line-height:27px;text-align:center;">24-10-27</div>
<div style="left:164px;top:602px;width:78px;height:25px;line-height:27px;text-align:center;color:#117722">波鸿</div>
<div style="left:243px;top:602px;width:95px;height:25px;line-height:27px;text-align:center;"><span style="color:#D42020">0-5</span>(0-2)</div>
<div style="left:339px;top:602px;width:41px;height:25px;line-height:27px;text-align:center;">2-6</div>
<div style="left:381px;top:602px;width:98px;height:25px;line-height:27px;text-align:center;">拜仁慕尼黑</div>
<div style="left:480px;top:602px;width:45px;height:25px;line-height:27px;text-align:center;">0.83</div>
<div style="left:526px;top:602px;width:100px;height:25px;line-height:27px;text-align:center;">受两球半</div>
<div style="left:627px;top:602px;width:47px;height:25px;line-height:27px;text-align:center;">1.06</div>
<div style="left:675px;top:602px;width:79px;height:25px;line-height:27px;text-align:center;">15.51</div>
<div style="left:755px;top:602px;width:64px;height:25px;line-height:27px;text-align:center;">9.38</div>
<div style="left:820px;top:602px;width:66px;height:25px;line-height:27px;text-align:center;">1.13</div>
<div style="left:887px;top:602px;width:39px;height:25px;line-height:27px;text-align:center;color:#0000CC">负</div>
<div style="left:927px;top:602px;width:40px;height:25px;line-height:27px;text-align:center;color:#0000CC">输</div>
<div style="left:968px;top:602px;width:60px;height:25px;line-height:27px;text-align:center;color:#D42020">大</div>
<div style="left:83px;top:628px;width:80px;height:25px;line-height:27px;text-align:center;">24-10-19</div>
<div style="left:164px;top:628px;width:78px;height:25px;line-height:27px;text-align:center;">霍芬海姆</div>
<div style="left:243px;top:628px;width:95px;height:25px;line-height:27px;text-align:center;"><span style="color:#D42020">3-1</span>(1-0)</div>
<div style="left:339px;top:628px;width:41px;height:25px;line-height:27px;text-align:center;">4-2</div>
<div style="left:381px;top:628px;width:98px;height:25px;line-height:27px;text-align:center;color:#117722">波鸿</div>
<div style="left:480px;top:628px;width:45px;height:25px;line-height:27px;text-align:center;">1.00</div>
<div style="left:526px;top:628px;width:100px;height:25px;line-height:27px;text-align:center;">一/球半</div>
<div style="left:627px;top:628px;width:47px;height:25px;line-height:27px;text-align:center;">0.89</div>
<div style="left:675px;top:628px;width:79px;height:25px;line-height:27px;text-align:center;">1.58</div>
<div style="left:755px;top:628px;width:64px;height:25px;line-height:27px;text-align:center;">4.69</div>
<div style="left:820px;top:628px;width:66px;height:25px;line-height:27px;text-align:center;">4.79</div>
<div style="left:887px;top:628px;width:39px;height:25px;line-height:27px;text-align:center;color:#0000CC">负</div>
<div style="left:927px;top:628px;width:40px;height:25px;line-height:27px;text-align:center;color:#0000CC">输</div>
<div style="left:968px;top:628px;width:60px;height:25px;line-height:27px;text-align:center;color:#D42020">大</div>
<div style="left:83px;top:654px;width:80px;height:25px;line-height:27px;text-align:center;">24-10-10</div>
<div style="left:164px;top:654px;width:78px;height:25px;line-height:27px;text-align:center;">科隆</div>
<div style="left:243px;top:654px;width:95px;height:25px;line-height:27px;text-align:center;"><span style="color:#D42020">3-2</span>(1-1)</div>
<div style="left:339px;top:654px;width:41px;height:25px;line-height:27px;text-align:center;">4-10</div>
<div style="left:381px;top:654px;width:98px;height:25px;line-height:27px;text-align:center;color:#117722">波鸿</div>
<div style="left:480px;top:654px;width:45px;height:25px;line-height:27px;text-align:center;">0.97</div>
<div style="left:526px;top:654px;width:100px;height:25px;line-height:27px;text-align:center;">平手</div>
<div style="left:627px;top:654px;width:47px;height:25px;line-height:27px;text-align:center;">0.85</div>
<div style="left:675px;top:654px;width:79px;height:25px;line-height:27px;text-align:center;">2.30</div>
<div style="left:755px;top:654px;width:64px;height:25px;line-height:27px;text-align:center;">3.66</div>
<div style="left:820px;top:654px;width:66px;height:25px;line-height:27px;text-align:center;">2.58</div>
<div style="left:887px;top:654px;width:39px;height:25px;line-height:27px;text-align:center;color:#0000CC">负</div>
<div style="left:927px;top:654px;width:40px;height:25px;line-height:27px;text-align:center;color:#0000CC">输</div>
<div style="left:968px;top:654px;width:60px;height:25px;line-height:27px;text-align:center;color:#D42020">大</div>
<div style="left:83px;top:680px;width:80px;height:25px;line-height:27px;text-align:center;">24-10-05</div>
<div style="left:164px;top:680px;width:78px;height:25px;line-height:27px;text-align:center;color:#117722">波鸿</div>
<div style="left:243px;top:680px;width:95px;height:25px;line-height:27px;text-align:center;"><span style="color:#D42020">1-3</span>(0-2)</div>
<div style="left:339px;top:680px;width:41px;height:25px;line-height:27px;text-align:center;">7-6</div>
<div style="left:381px;top:680px;width:98px;height:25px;line-height:27px;text-align:center;">沃尔夫斯堡</div>
<div style="left:480px;top:680px;width:45px;height:25px;line-height:27px;text-align:center;">0.90</div>
<div style="left:526px;top:680px;width:100px;height:25px;line-height:27px;text-align:center;">受平/半</div>
<div style="left:627px;top:680px;width:47px;height:25px;line-height:27px;text-align:center;">0.99</div>
<div style="left:675px;top:680px;width:79px;height:25px;line-height:27px;text-align:center;">3.03</div>
<div style="left:755px;top:680px;width:64px;height:25px;line-height:27px;text-align:center;">3.68</div>
<div style="left:820px;top:680px;width:66px;height:25px;line-height:27px;text-align:center;">2.20</div>
<div style="left:887px;top:680px;width:39px;height:25px;line-height:27px;text-align:center;color:#0000CC">负</div>
<div style="left:927px;top:680px;width:40px;height:25px;line-height:27px;text-align:center;color:#0000CC">输</div>
<div style="left:968px;top:680px;width:60px;height:25px;line-height:27px;text-align:center;color:#D42020">大</div>
<div style="left:1px;top:706px;width:1028px;height:25px;line-height:25px;text-align:center;letter-spacing:0.25px">近<span style="color:#D42020">10</span>场,胜1平1负8, 胜率:<span style="color:#D42020">10%</span> 让胜率:<span style="color:#D42020">20%</span> 大率:<span style="color:#D42020">50%</span> 单率:<span style="color:#D42020">50%</span></div></div></body></html>
